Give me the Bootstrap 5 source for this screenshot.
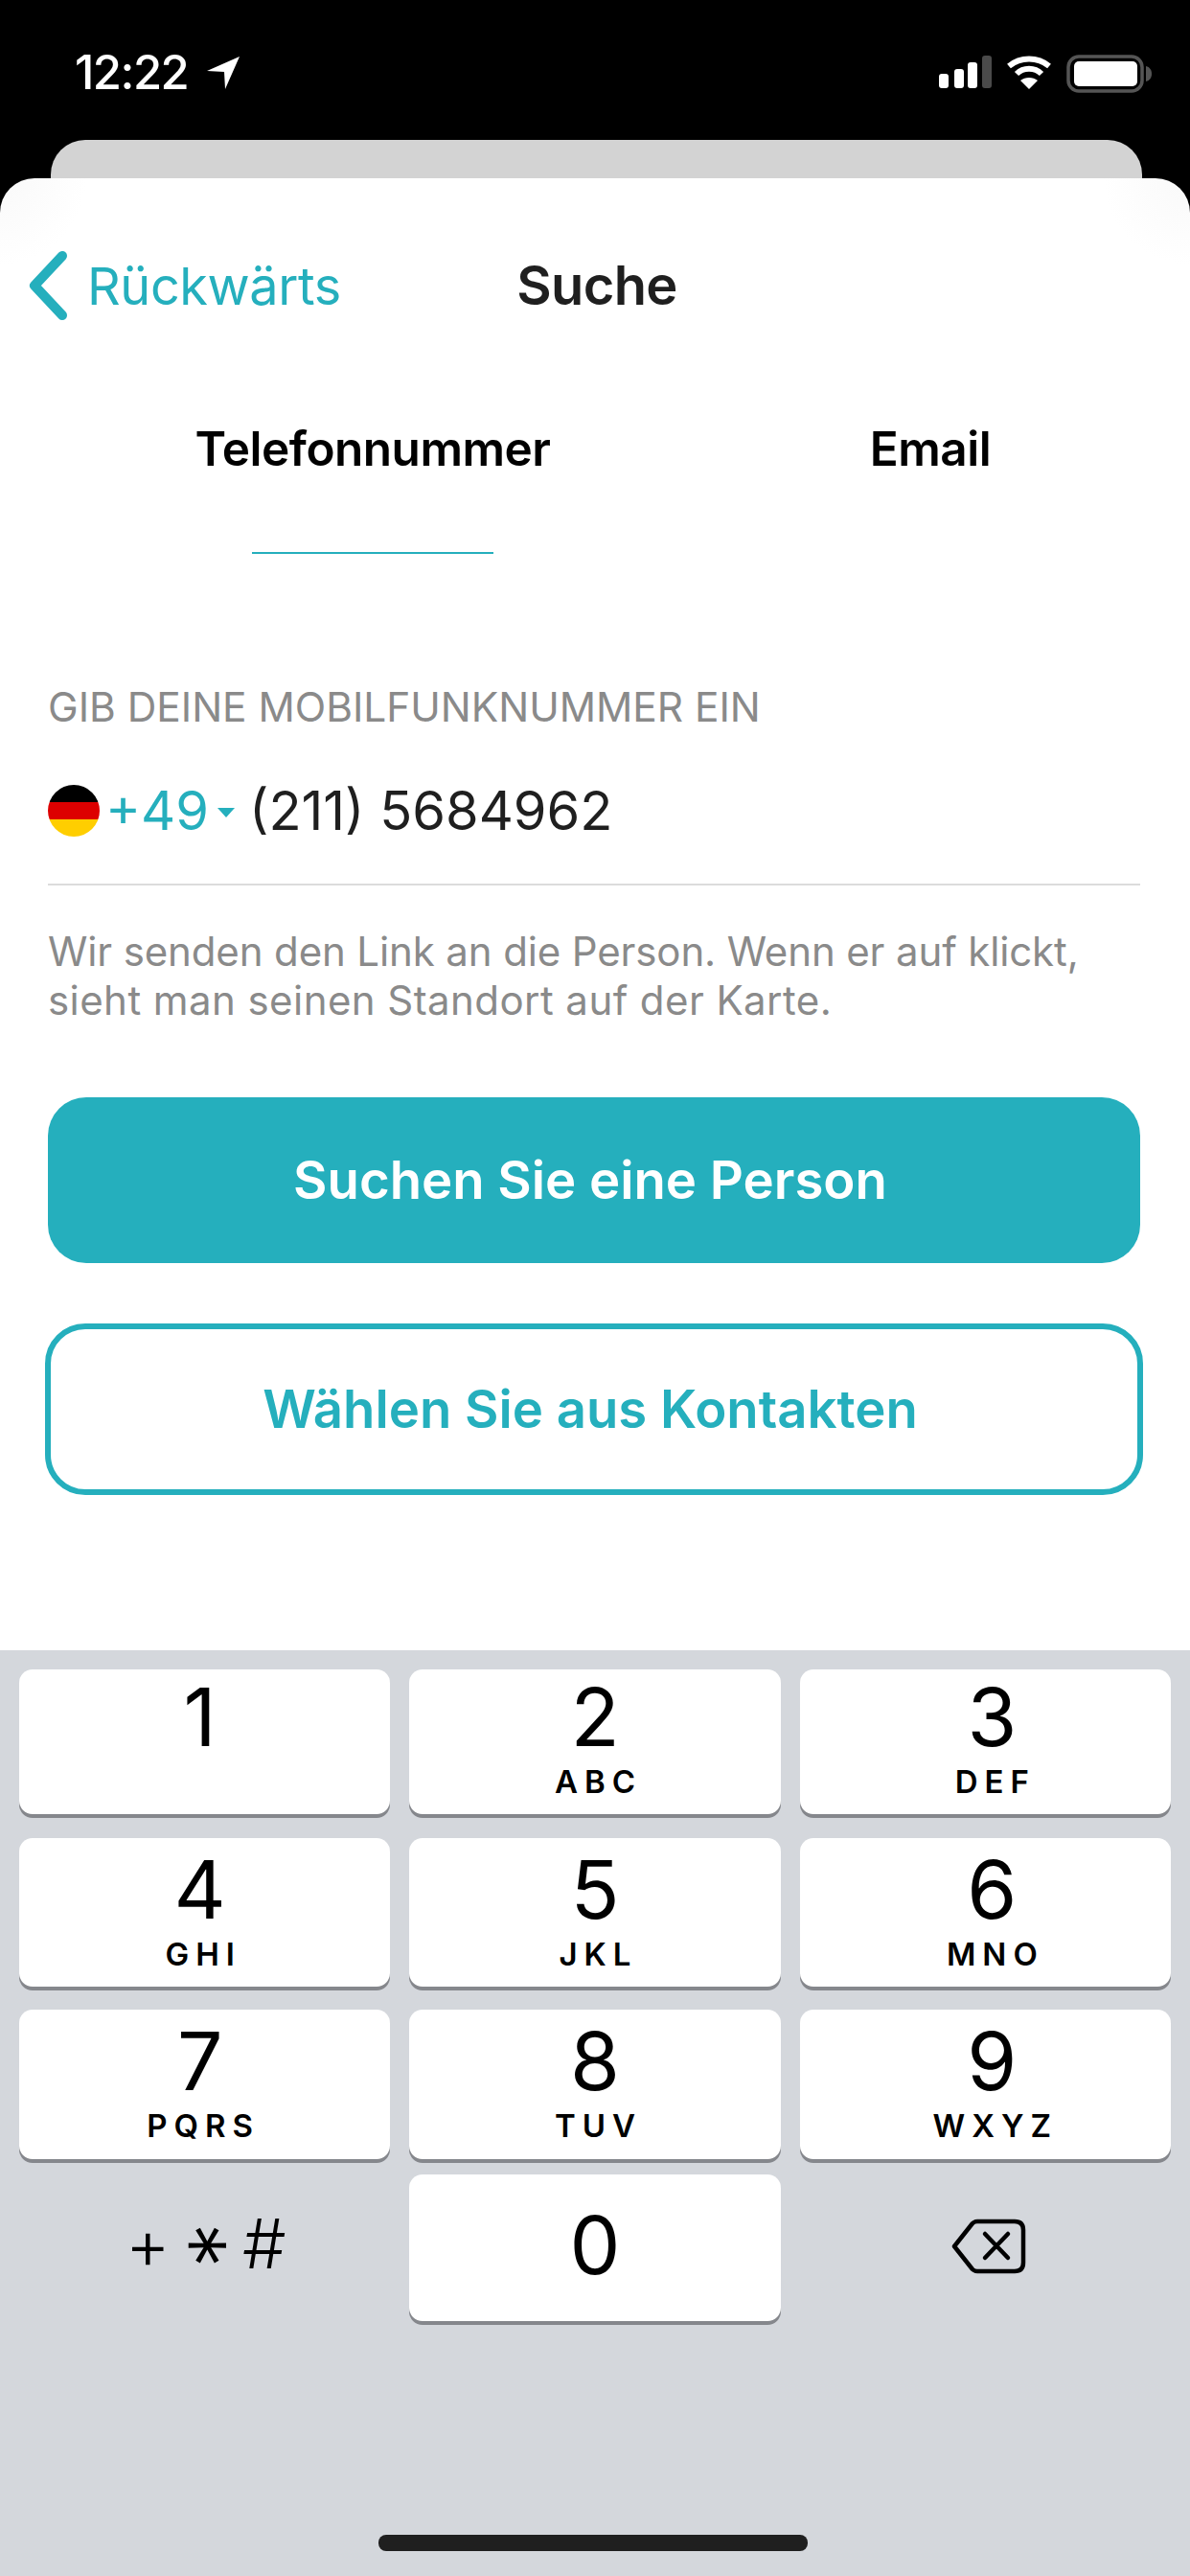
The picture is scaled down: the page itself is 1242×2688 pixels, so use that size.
<!DOCTYPE html>
<html lang="de">
<head>
    <meta charset="UTF-8">
    <meta name="viewport" content="width=device-width, initial-scale=1.0">
    <title>Suche</title>
    <link rel="stylesheet" href="https://cdn.jsdelivr.net/npm/bootstrap@5.3.1/dist/css/bootstrap.min.css" />
    <style>
        body { background: #000; font-family: "Inter", "Liberation Sans", sans-serif; }
        .phone-app { width: 1242px; height: 2688px; overflow: hidden; }

        /* status bar */
        .status-bar { height: 146px; padding: 57px 39px 0 78px; color: #fff; }
        .status-time { font-size: 49px; font-weight: 500; line-height: 38px; letter-spacing: -1.5px; }
        .status-arrow { margin-left: 19px; }
        .status-icons { gap: 15px; }

        /* cards */
        .peek-card { height: 40px; margin: 0 50px 0 53px; background: #d3d3d3; border-radius: 36px 36px 0 0; }
        .sheet { height: 1536px; background: radial-gradient(circle at 0 0, #f9f9f9 0, #fff 90px) left top / 50% 100% no-repeat, radial-gradient(circle at 100% 0, #f9f9f9 0, #fff 90px) right top / 50% 100% no-repeat; border-radius: 36px 36px 0 0; padding: 0 52px 0 50px; }

        .nav-bar { display: grid; grid-template-columns: 1fr auto 1fr; height: 64px; margin: 80px -52px 0 -50px; padding-left: 30px; padding-right: 26px; }
        .back-link { color: #25afbd; font-size: 54px; line-height: 64px; text-decoration: none; gap: 20px; letter-spacing: -.4px; margin-top: -4px; }
        .back-label { margin-top: 2px; }
        .nav-title { color: #1f1f1f; font-size: 56px; font-weight: 600; line-height: 64px; letter-spacing: -.6px; }

        .tab-row { margin: 110px -52px 0 -50px; }
        .tab-one { width: 778px; }
        .tab-two { width: 386px; }
        .tab-text { color: #000; font-size: 49.5px; font-weight: 600; line-height: 56px; letter-spacing: -.5px; }
        .tab-line { width: 252px; height: 2px; margin-top: 80px; background: #25afbd; }
        .tab-two .tab-line { background: transparent; }

        .field-label { color: #8a8a8a; font-size: 42.4px; line-height: 48px; margin-top: 136px; }
        .phone-row { height: 64px; margin-top: 52px; }
        .flag-round { width: 54px; height: 54px; border-radius: 50%; background: linear-gradient(#000 33.3%, #dd0000 33.3% 66.6%, #ffce00 66.6%); }
        .dial-code { color: #25afbd; font-size: 56px; margin-left: 6px; }
        .dial-caret { width: 0; height: 0; margin: 4px 15px 0 9px; border-left: 9px solid transparent; border-right: 9px solid transparent; border-top: 10px solid #25afbd; }
        .phone-num { color: #1f1f1f; font-size: 56px; }
        .field-line { height: 2px; margin-top: 44px; background: #dcdcdc; }
        .field-help { color: #8a8a8a; font-size: 42px; line-height: 51px; margin: 43px 0 0; letter-spacing: -.13px; }
        .help-second { letter-spacing: .43px; }

        .btn-search { display: block; width: 100%; height: 173px; margin-top: 76px; padding-right: 20px; background: #25afbd; border: 0; border-radius: 40px; color: #fff; font-size: 54.5px; font-weight: 600; }
        .btn-contacts { display: block; width: calc(100% + 6px); height: 179px; margin: 63px -3px 0; padding-right: 20px; background: #fff; border: 6px solid #25afbd; border-radius: 42px; color: #25afbd; font-size: 54.5px; font-weight: 600; }

        /* keyboard */
        .keypad { height: 966px; background: #d4d7dc; padding: 20px 20px 0; }
        .key-row { gap: 20px; }
        .key-row-a { height: 151px; margin-bottom: 25px; }
        .key-row-b { height: 155px; margin-bottom: 24px; }
        .key-row-c { height: 156px; margin-bottom: 16px; }
        .key-row-d { height: 153px; }
        .kb-key { flex: 1 1 0; padding-top: 10px; background: #fff; border-radius: 14px; box-shadow: 0 4px 0 #85878c; color: #000; }
        .key-row-b .kb-key, .key-row-c .kb-key { padding-top: 14px; }
        .key-row-d .kb-key { padding: 0 0 6px; }
        .key-row > .kb-key:first-child > div { transform: translateX(-5px); }
        .key-row > .kb-key:last-child > div { transform: translateX(7px); }
        .kb-blank { flex: 1 1 0; color: #000; }
        .kb-digit { font-size: 84px; line-height: 80px; }
        .kb-letters { font-size: 33px; font-weight: 600; line-height: 34px; letter-spacing: 7px; margin-top: 10px; padding-left: 7px; }
        .kb-symbols { font-size: 72px; font-weight: 300; line-height: 72px; margin: -10px 0 0 2px; }
        .sym-star { display: inline-block; width: 58px; margin: 0 5px 0 12px; font-size: 96px; text-align: center; transform: translate(-18px, 2px) rotate(90deg); }
        .kb-back { margin: -4px 0 0 8px; }
        .home-bar { width: 448px; height: 17px; margin: 223px 0 0 375px; background: #1f1f1f; border-radius: 8px; }
    </style>
</head>
<body>
<div class="phone-app d-flex flex-column">
    <div class="status-bar d-flex justify-content-between align-items-start">
        <div class="d-flex align-items-center">
            <span class="status-time">12:22</span>
            <svg class="status-arrow" width="36" height="36" viewBox="0 0 36 36"><path fill="#fff" d="M35 1 L1 16 L19 17 L20 35 Z"/></svg>
        </div>
        <div class="status-icons d-flex align-items-start">
            <svg width="56" height="36" viewBox="0 0 56 36">
                <rect x="1" y="20" width="10" height="15" rx="3" fill="#fff"/>
                <rect x="17" y="15" width="10" height="20" rx="3" fill="#fff"/>
                <rect x="31" y="8" width="10" height="27" rx="3" fill="#fff"/>
                <rect x="46" y="1" width="10" height="34" rx="3" fill="#4a4a4a"/>
            </svg>
            <svg width="48" height="36" viewBox="0 0 48 36">
                <path fill="none" stroke="#fff" stroke-width="6" d="M3 12 C15 2 33 2 45 12"/>
                <path fill="none" stroke="#fff" stroke-width="6" d="M11 20 C18 13 30 13 37 20"/>
                <path fill="#fff" d="M24 36 L15 27 C20 23 28 23 33 27 Z"/>
            </svg>
            <svg width="90" height="40" viewBox="0 0 90 40">
                <rect x="2" y="2" width="77" height="36" rx="11" fill="none" stroke="#555" stroke-width="3.5"/>
                <rect x="8" y="7" width="66" height="26" rx="5" fill="#fff"/>
                <path fill="#555" d="M83 12 C87 13 89 16 89 20 C89 24 87 27 83 28 Z"/>
            </svg>
        </div>
    </div>

    <div class="peek-card"></div>

    <div class="sheet">
        <div class="nav-bar">
            <a href="#" class="back-link d-flex align-items-center">
                <svg width="41" height="72" viewBox="0 0 41 72"><path fill="none" stroke="#25afbd" stroke-width="10" stroke-linecap="round" stroke-linejoin="round" d="M35 5 L6 36 L35 67"/></svg>
                <span class="back-label">Rückwärts</span>
            </a>
            <div class="nav-title">Suche</div>
            <div></div>
        </div>

        <div class="tab-row d-flex">
            <div class="tab-one d-flex flex-column align-items-center">
                <div class="tab-text">Telefonnummer</div>
                <div class="tab-line"></div>
            </div>
            <div class="tab-two d-flex flex-column align-items-center">
                <div class="tab-text">Email</div>
                <div class="tab-line"></div>
            </div>
        </div>

        <div class="field-label">GIB DEINE MOBILFUNKNUMMER EIN</div>
        <div class="phone-row d-flex align-items-center">
            <span class="flag-round"></span>
            <span class="dial-code">+49</span>
            <span class="dial-caret"></span>
            <span class="phone-num">(211) 5684962</span>
        </div>
        <div class="field-line"></div>
        <p class="field-help">Wir senden den Link an die Person. Wenn er auf klickt,<br><span class="help-second">sieht man seinen Standort auf der Karte.</span></p>

        <button type="button" class="btn btn-search">Suchen Sie eine Person</button>
        <button type="button" class="btn btn-contacts">Wählen Sie aus Kontakten</button>
    </div>

    <div class="keypad">
        <div class="key-row key-row-a d-flex">
            <div class="kb-key d-flex flex-column align-items-center"><div class="kb-digit">1</div></div>
            <div class="kb-key d-flex flex-column align-items-center"><div class="kb-digit">2</div><div class="kb-letters">ABC</div></div>
            <div class="kb-key d-flex flex-column align-items-center"><div class="kb-digit">3</div><div class="kb-letters">DEF</div></div>
        </div>
        <div class="key-row key-row-b d-flex">
            <div class="kb-key d-flex flex-column align-items-center"><div class="kb-digit">4</div><div class="kb-letters">GHI</div></div>
            <div class="kb-key d-flex flex-column align-items-center"><div class="kb-digit">5</div><div class="kb-letters">JKL</div></div>
            <div class="kb-key d-flex flex-column align-items-center"><div class="kb-digit">6</div><div class="kb-letters">MNO</div></div>
        </div>
        <div class="key-row key-row-c d-flex">
            <div class="kb-key d-flex flex-column align-items-center"><div class="kb-digit">7</div><div class="kb-letters">PQRS</div></div>
            <div class="kb-key d-flex flex-column align-items-center"><div class="kb-digit">8</div><div class="kb-letters">TUV</div></div>
            <div class="kb-key d-flex flex-column align-items-center"><div class="kb-digit">9</div><div class="kb-letters">WXYZ</div></div>
        </div>
        <div class="key-row key-row-d d-flex">
            <div class="kb-blank d-flex align-items-center justify-content-center"><div class="kb-symbols d-flex"><span>+</span><span class="sym-star">*</span><span>#</span></div></div>
            <div class="kb-key d-flex align-items-center justify-content-center"><div class="kb-digit">0</div></div>
            <div class="kb-blank d-flex align-items-center justify-content-center">
                <svg class="kb-back" width="78" height="58" viewBox="0 0 78 58">
                    <path fill="none" stroke="#000" stroke-width="4.5" stroke-linejoin="round" d="M27 3 H66 Q75 3 75 12 V46 Q75 55 66 55 H27 Q24 55 22 53 L3 29 L22 5 Q24 3 27 3 Z"/>
                    <path fill="none" stroke="#000" stroke-width="4.5" stroke-linecap="round" d="M35 16 L59 41 M59 16 L35 41"/>
                </svg>
            </div>
        </div>
        <div class="home-bar"></div>
    </div>
</div>
<script src="https://cdn.jsdelivr.net/npm/bootstrap@5.3.1/dist/js/bootstrap.bundle.min.js"></script>
</body>
</html>
